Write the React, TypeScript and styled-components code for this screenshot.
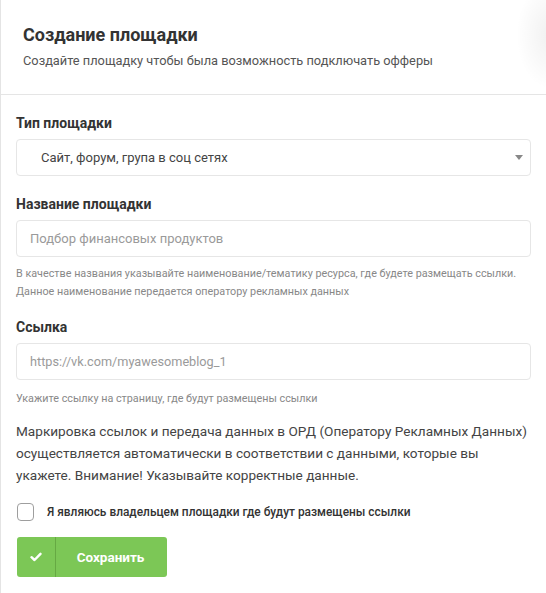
import React from "react";
import styled, { createGlobalStyle } from "styled-components";

const Global = createGlobalStyle`
  html, body { margin: 0; padding: 0; background: #fff; }
  body { font-family: Roboto, "Noto Sans", Arial, sans-serif; -webkit-font-smoothing: antialiased; }
  * { box-sizing: border-box; }
`;

const Modal = styled.div`
  width: 546px;
  height: 593px;
  background: #fff;
  border-left: 1px solid #e4e4e4;
  position: relative;
  overflow: hidden;
  &::after {
    content: "";
    position: absolute;
    right: -40px;
    top: -20px;
    width: 70px;
    height: 110px;
    border-radius: 50%;
    background: radial-gradient(ellipse at center, rgba(0,0,0,0.06), rgba(0,0,0,0) 70%);
    pointer-events: none;
  }
`;

const Header = styled.div`
  padding: 23px 22px 25px 22px;
  border-bottom: 1px solid #e5e5e5;
`;

const Title = styled.h2`
  margin: 0;
  font-size: 18px;
  font-weight: 700;
  color: #333;
  line-height: 24px;
`;

const Subtitle = styled.p`
  margin: 6px 0 0;
  font-size: 12.8px;
  color: #555;
  line-height: 16px;
`;

const Body = styled.div`
  padding: 18px 15px 0 15px;
  display: flex;
  flex-direction: column;
`;

const Field = styled.div<{ $mb?: number }>`
  display: flex;
  flex-direction: column;
  margin-bottom: ${(p) => p.$mb ?? 20}px;
`;

const Label = styled.label`
  font-size: 14px;
  font-weight: 700;
  color: #333;
  line-height: 20px;
  margin-bottom: 6px;
`;

const Box = styled.div<{ $pl?: number }>`
  height: 37px;
  border: 1px solid #e6e6e6;
  border-radius: 4px;
  display: flex;
  align-items: center;
  padding: 0 7px 0 ${(p) => p.$pl ?? 13}px;
  font-size: 13px;
`;

const Value = styled.span`
  color: #444;
  flex: 1;
`;

const Placeholder = styled.span<{ $size?: number }>`
  color: #9a9a9a;
  flex: 1;
  font-size: ${(p) => p.$size ?? 13}px;
`;

const Caret = styled.span`
  width: 0;
  height: 0;
  border-left: 4px solid transparent;
  border-right: 4px solid transparent;
  border-top: 5px solid #888;
`;

const Help = styled.div<{ $mt?: number }>`
  font-size: 10.8px;
  color: #888;
  line-height: 18px;
  margin-top: ${(p) => p.$mt ?? 8}px;
`;

const Notice = styled.p`
  margin: 0 0 17px;
  font-size: 13.6px;
  color: #444;
  line-height: 22px;
`;

const CheckRow = styled.label`
  display: flex;
  align-items: center;
  gap: 13px;
  margin-bottom: 16px;
  margin-left: 1px;
`;

const CheckBox = styled.span`
  width: 17px;
  height: 18px;
  border: 1px solid #9e9e9e;
  border-radius: 4px;
  background: #fff;
`;

const CheckText = styled.span`
  font-size: 11.9px;
  font-weight: 500;
  color: #333;
`;

const SaveButton = styled.button`
  display: flex;
  align-items: stretch;
  width: 150px;
  height: 40px;
  padding: 0;
  margin-left: 1px;
  border: none;
  border-radius: 3px;
  background: #7cc756;
  color: #fff;
  font-family: inherit;
  cursor: pointer;
`;

const IconPart = styled.span`
  width: 39px;
  display: flex;
  align-items: center;
  justify-content: center;
  border-right: 1px solid #66a943;
`;

const ButtonText = styled.span`
  flex: 1;
  display: flex;
  align-items: center;
  justify-content: center;
  font-size: 13.5px;
  font-weight: 700;
  padding-right: 2px;
`;

export default function App() {
  return (
    <>
      <Global />
      <Modal>
        <Header>
          <Title>Создание площадки</Title>
          <Subtitle>Создайте площадку чтобы была возможность подключать офферы</Subtitle>
        </Header>
        <Body>
          <Field $mb={18}>
            <Label>Тип площадки</Label>
            <Box $pl={24}>
              <Value>Сайт, форум, група в соц сетях</Value>
              <Caret />
            </Box>
          </Field>
          <Field $mb={16}>
            <Label>Название площадки</Label>
            <Box>
              <Placeholder>Подбор финансовых продуктов</Placeholder>
            </Box>
            <Help>
              В качестве названия указывайте наименование/тематику ресурса, где будете размещать ссылки.
              <br />
              Данное наименование передается оператору рекламных данных
            </Help>
          </Field>
          <Field $mb={12}>
            <Label>Ссылка</Label>
            <Box>
              <Placeholder $size={12.7}>https://vk.com/myawesomeblog_1</Placeholder>
            </Box>
            <Help $mt={10}>Укажите ссылку на страницу, где будут размещены ссылки</Help>
          </Field>
          <Notice>
            Маркировка ссылок и передача данных в ОРД (Оператору Рекламных Данных) осуществляется
            автоматически в соответствии с данными, которые вы укажете. Внимание! Указывайте
            корректные данные.
          </Notice>
          <CheckRow>
            <CheckBox />
            <CheckText>Я являюсь владельцем площадки где будут размещены ссылки</CheckText>
          </CheckRow>
          <SaveButton>
            <IconPart>
              <svg width="12" height="10" viewBox="0 0 12 10">
                <path d="M1.5 5.2 L4.5 8 L10.5 1.8" stroke="#fff" strokeWidth="2.4" fill="none" strokeLinecap="round" strokeLinejoin="round" />
              </svg>
            </IconPart>
            <ButtonText>Сохранить</ButtonText>
          </SaveButton>
        </Body>
      </Modal>
    </>
  );
}
